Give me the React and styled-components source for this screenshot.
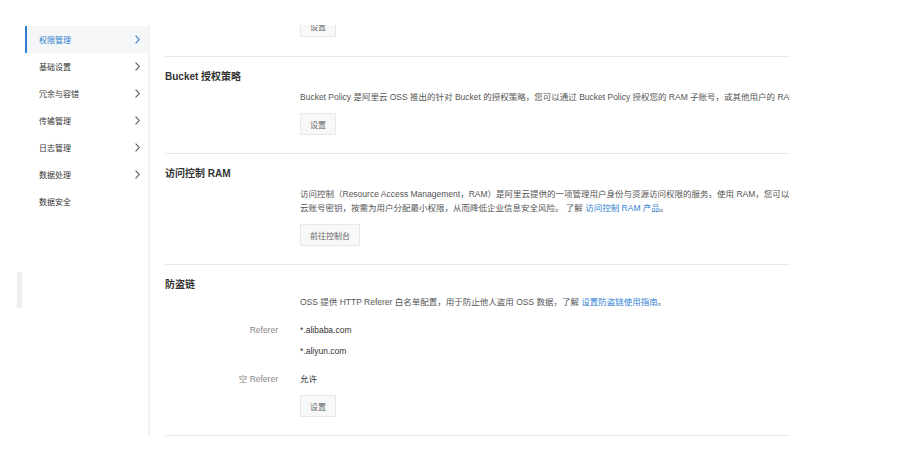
import React from "react";
import styled, { createGlobalStyle } from "styled-components";

const GlobalStyle = createGlobalStyle`
  html, body {
    margin: 0;
    padding: 0;
    background: #fff;
    font-family: "Liberation Sans", "Noto Sans CJK SC", sans-serif;
    color: #333;
  }
`;

const Page = styled.div`
  position: relative;
  display: flex;
  align-items: flex-start;
  width: 905px;
  height: 452px;
  box-sizing: border-box;
  padding: 25px 0 0 25px;
  overflow: hidden;
`;

const Handle = styled.div`
  position: absolute;
  left: 17px;
  top: 272px;
  width: 5px;
  height: 36px;
  background: #efefef;
  border-radius: 1px;
`;

const Sidebar = styled.nav`
  width: 125px;
  height: 412px;
  padding-top: 1px;
  box-sizing: border-box;
  border-right: 2px solid #f2f2f2;
`;

const NavItem = styled.div`
  display: flex;
  align-items: center;
  justify-content: space-between;
  height: 27px;
  padding: 0 8px 0 12px;
  border-left: 2px solid ${(p) => (p.$active ? "#2f7fd1" : "transparent")};
  background: ${(p) => (p.$active ? "#f5f6f8" : "transparent")};
  color: ${(p) => (p.$active ? "#2f7fd1" : "#333")};
  font-size: 8px;
`;

const Chevron = ({ color }) => (
  <svg width="5" height="9" viewBox="0 0 5 9">
    <polyline points="0.6,0.6 4.2,4.5 0.6,8.4" fill="none" stroke={color} strokeWidth="1.1" />
  </svg>
);

const Content = styled.main`
  width: 625px;
  height: 412px;
  margin-left: 15px;
  overflow: hidden;
`;

const Section = styled.section`
  padding: ${(p) => (p.$clipped ? "0" : "13px")} 0 ${(p) => (p.$clipped ? 19 : 18)}px;
  border-bottom: 1px solid #e9e9e9;
`;

const Title = styled.h3`
  margin: 0;
  font-size: 10px;
  line-height: 14px;
  font-weight: 700;
  color: #333;
`;

const Body = styled.div`
  margin-left: 135px;
  margin-top: ${(p) => p.$top || 0}px;
`;

const Desc = styled.p`
  margin: 0;
  font-size: 8.5px;
  line-height: 14px;
  color: #555;
  white-space: nowrap;
`;

const Link = styled.a`
  color: #2f7fd1;
  text-decoration: none;
`;

const Button = styled.button`
  display: block;
  height: 22px;
  margin-top: ${(p) => p.$top || 0}px;
  padding: 0 9px;
  border: 1px solid #e8e8e8;
  background: #f8f8f8;
  color: #666;
  font-family: inherit;
  font-size: 8px;
`;

const Row = styled.div`
  display: flex;
  align-items: center;
  height: 14px;
  margin-top: ${(p) => p.$top || 0}px;
  font-size: 8.5px;
`;

const Label = styled.span`
  width: 113px;
  margin-right: 22px;
  text-align: right;
  color: #888;
`;

const Value = styled.span`
  color: #333;
`;

const navItems = ["权限管理", "基础设置", "冗余与容错", "传输管理", "日志管理", "数据处理", "数据安全"];

export default function App() {
  return (
    <Page>
      <GlobalStyle />
      <Handle />
      <Sidebar>
        {navItems.map((name, i) => (
          <NavItem key={name} $active={i === 0}>
            <span>{name}</span>
            {i < 6 && <Chevron color={i === 0 ? "#2f7fd1" : "#555"} />}
          </NavItem>
        ))}
      </Sidebar>
      <Content>
        <Section $clipped>
          <Body>
            <Button $top={-10}>设置</Button>
          </Body>
        </Section>
        <Section>
          <Title>Bucket 授权策略</Title>
          <Body $top={6}>
            <Desc>
              Bucket Policy 是阿里云 OSS 推出的针对 Bucket 的授权策略，您可以通过 Bucket Policy 授权您的 RAM 子账号，或其他用户的 RAM 子账号访问您的 Bucket 资源。
            </Desc>
            <Button $top={9}>设置</Button>
          </Body>
        </Section>
        <Section>
          <Title>访问控制 RAM</Title>
          <Body $top={6}>
            <Desc>
              访问控制（Resource Access Management，RAM）是阿里云提供的一项管理用户身份与资源访问权限的服务。使用 RAM，您可以创建、管理 RAM 用户，并可以控制这些 RAM 用户对资源的操作权限，避免与其他用户共享
            </Desc>
            <Desc>
              云账号密钥，按需为用户分配最小权限，从而降低企业信息安全风险。 了解 <Link>访问控制 RAM 产品</Link>。
            </Desc>
            <Button $top={9}>前往控制台</Button>
          </Body>
        </Section>
        <Section>
          <Title>防盗链</Title>
          <Body $top={3}>
            <Desc>
              OSS 提供 HTTP Referer 白名单配置，用于防止他人盗用 OSS 数据，了解 <Link>设置防盗链使用指南</Link>。
            </Desc>
          </Body>
          <Row $top={14}>
            <Label>Referer</Label>
            <Value>*.alibaba.com</Value>
          </Row>
          <Row $top={7}>
            <Label />
            <Value>*.aliyun.com</Value>
          </Row>
          <Row $top={13}>
            <Label>空 Referer</Label>
            <Value>允许</Value>
          </Row>
          <Body>
            <Button $top={10}>设置</Button>
          </Body>
        </Section>
      </Content>
    </Page>
  );
}
